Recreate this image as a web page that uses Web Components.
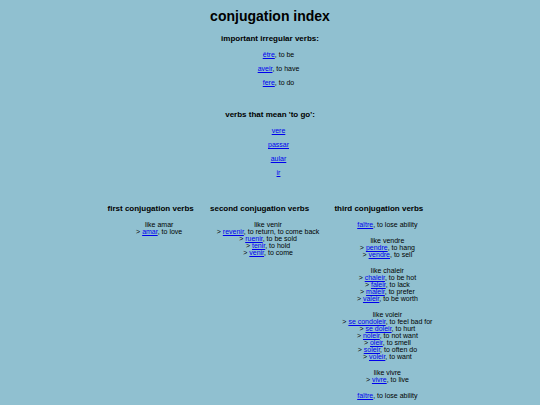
<!DOCTYPE html>
<html lang="en">
<head>
<meta charset="utf-8">
<meta name="viewport" content="width=device-width, initial-scale=1">
<title>conjugation index</title>
<style>
  body {
    margin: 0;
    background: #90c0d0;
    color: #000;
    font-family: "Liberation Sans", Arial, sans-serif;
    font-size: 7px;
    line-height: 7px;
  }
</style>
</head>
<body>
  <conjugation-index>
    <span slot="title">conjugation index</span>

    <verb-section>
      <span slot="heading">important irregular verbs:</span>
      <verb-entry verb="être">, to be</verb-entry>
      <verb-entry verb="aveir">, to have</verb-entry>
      <verb-entry verb="fere">, to do</verb-entry>
    </verb-section>

    <verb-section>
      <span slot="heading">verbs that mean 'to go':</span>
      <verb-entry verb="vere"></verb-entry>
      <verb-entry verb="passar"></verb-entry>
      <verb-entry verb="aular"></verb-entry>
      <verb-entry verb="ir"></verb-entry>
    </verb-section>

    <verb-section slot="column">
      <span slot="heading">first conjugation verbs</span>
      <verb-group model="amar">
        <verb-entry verb="amar" nested>, to love</verb-entry>
      </verb-group>
    </verb-section>

    <verb-section slot="column">
      <span slot="heading">second conjugation verbs</span>
      <verb-group model="venir">
        <verb-entry verb="revenir" nested>, to return, to come back</verb-entry>
        <verb-entry verb="ruenir" nested>, to be sold</verb-entry>
        <verb-entry verb="tenir" nested>, to hold</verb-entry>
        <verb-entry verb="venir" nested>, to come</verb-entry>
      </verb-group>
    </verb-section>

    <verb-section slot="column">
      <span slot="heading">third conjugation verbs</span>
      <verb-entry verb="faître">, to lose ability</verb-entry>
      <verb-group model="vendre">
        <verb-entry verb="pendre" nested>, to hang</verb-entry>
        <verb-entry verb="vendre" nested>, to sell</verb-entry>
      </verb-group>
      <verb-group model="chaleir">
        <verb-entry verb="chaleir" nested>, to be hot</verb-entry>
        <verb-entry verb="faleir" nested>, to lack</verb-entry>
        <verb-entry verb="maleir" nested>, to prefer</verb-entry>
        <verb-entry verb="valeir" nested>, to be worth</verb-entry>
      </verb-group>
      <verb-group model="voleir">
        <verb-entry verb="se condoleir" nested>, to feel bad for</verb-entry>
        <verb-entry verb="se doleir" nested>, to hurt</verb-entry>
        <verb-entry verb="noleir" nested>, to not want</verb-entry>
        <verb-entry verb="oleir" nested>, to smell</verb-entry>
        <verb-entry verb="soleir" nested>, to often do</verb-entry>
        <verb-entry verb="voleir" nested>, to want</verb-entry>
      </verb-group>
      <verb-group model="vivre">
        <verb-entry verb="vivre" nested>, to live</verb-entry>
      </verb-group>
      <verb-entry verb="faître">, to lose ability</verb-entry>
    </verb-section>
  </conjugation-index>

<script>
const indexTemplate = document.createElement('template')

indexTemplate.innerHTML = `
  <style>
    :host {
      display: block;
      padding: 8px 8px 6px;
      text-align: center;
    }

    h1 {
      margin: 0 0 10px;
      font-size: 14px;
      line-height: 16px;
    }

    #sections {
      display: flex;
      flex-direction: column;
      gap: 24px;
    }

    #columns {
      display: flex;
      justify-content: center;
      align-items: flex-start;
      gap: 6px;
      padding-top: 4px;
      --entry-gap: 9px;
    }
  </style>
  <h1><slot name="title"></slot></h1>
  <div id="sections">
    <slot></slot>
    <div id="columns"><slot name="column"></slot></div>
  </div>
`

customElements.define('conjugation-index',
  /**
   * The whole page: title, stacked sections and a row of columns.
   *
   */
  class extends HTMLElement {
    constructor () {
      super()

      this.attachShadow({ mode: 'open' })
        .appendChild(indexTemplate.content.cloneNode(true))
    }
  })

const sectionTemplate = document.createElement('template')

sectionTemplate.innerHTML = `
  <style>
    :host {
      display: block;
    }

    h3 {
      margin: 0 0 7px;
      font-size: 8px;
      line-height: 10px;
    }

    #list {
      display: flex;
      flex-direction: column;
      gap: var(--entry-gap, 7px);
      padding-left: 17px;
    }
  </style>
  <h3><slot name="heading"></slot></h3>
  <div id="list" role="list"><slot></slot></div>
`

customElements.define('verb-section',
  /**
   * A heading with an indented list below it.
   *
   */
  class extends HTMLElement {
    constructor () {
      super()

      this.attachShadow({ mode: 'open' })
        .appendChild(sectionTemplate.content.cloneNode(true))
    }
  })

const groupTemplate = document.createElement('template')

groupTemplate.innerHTML = `
  <style>
    :host {
      display: block;
    }
  </style>
  <div id="model"></div>
  <slot></slot>
`

customElements.define('verb-group',
  /**
   * Verbs that are conjugated like a model verb.
   *
   */
  class extends HTMLElement {
    constructor () {
      super()

      this.attachShadow({ mode: 'open' })
        .appendChild(groupTemplate.content.cloneNode(true))
    }

    /**
     * Write the name of the model verb.
     *
     */
    connectedCallback () {
      this.setAttribute('role', 'listitem')
      this.shadowRoot.querySelector('#model').textContent = `like ${this.getAttribute('model')}`
    }
  })

const entryTemplate = document.createElement('template')

entryTemplate.innerHTML = `
  <style>
    :host {
      display: block;
      white-space: nowrap;
    }

    a {
      color: #00e;
      text-decoration: underline;
    }
  </style>
  <span id="marker"></span><a></a><slot></slot>
`

customElements.define('verb-entry',
  /**
   * A linked verb followed by its meaning.
   *
   */
  class extends HTMLElement {
    constructor () {
      super()

      this.attachShadow({ mode: 'open' })
        .appendChild(entryTemplate.content.cloneNode(true))
    }

    /**
     * Fill in the link, and the marker for verbs inside a group.
     *
     */
    connectedCallback () {
      const verb = this.getAttribute('verb')
      const link = this.shadowRoot.querySelector('a')

      link.textContent = verb
      link.href = `#${encodeURIComponent(verb)}`

      if (this.hasAttribute('nested')) {
        this.shadowRoot.querySelector('#marker').textContent = '> '
      } else {
        this.setAttribute('role', 'listitem')
      }
    }
  })
</script>
</body>
</html>
